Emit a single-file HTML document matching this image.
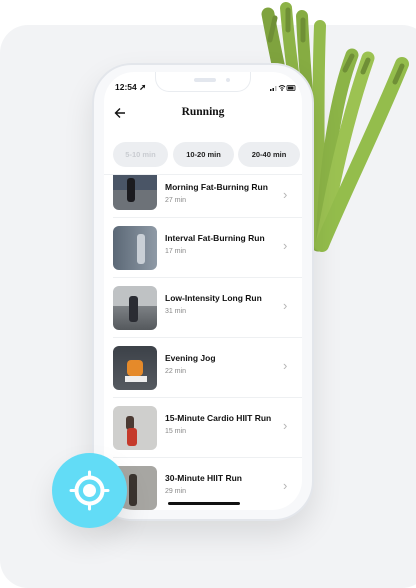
<!DOCTYPE html>
<html><head><meta charset="utf-8">
<style>
*{margin:0;padding:0;box-sizing:border-box}
body{width:416px;height:588px;background:#fff;position:relative;overflow:hidden;font-family:"Liberation Sans",sans-serif}
.card{position:absolute;left:0;top:25px;width:430px;height:563px;background:#f2f3f5;border-radius:28px}
.asp{position:absolute;left:0;top:0}
.phone{position:absolute;left:92px;top:63px;width:222px;height:458px;border-radius:40px;background:#f7f8fa;border:2px solid #e3e6eb;box-shadow:0 14px 30px rgba(0,0,0,.10)}
.screen{position:absolute;left:104px;top:72px;width:198px;height:438px;border-radius:30px;background:#fff;overflow:hidden}
.notch{position:absolute;left:51px;top:0;width:96px;height:20px;border:1.5px solid #e9ecf0;border-top:none;border-radius:0 0 14px 14px;background:#fff}
.notch .s{position:absolute;left:38px;top:6px;width:22px;height:4px;border-radius:2px;background:#e3e7ee}
.notch .d{position:absolute;left:70px;top:6px;width:4px;height:4px;border-radius:2px;background:#e3e7ee}
.time{position:absolute;left:11px;top:10px;font-size:8.5px;color:#111;font-weight:bold}
.title{position:absolute;left:0;width:198px;top:34px;text-align:center;font-family:"Liberation Serif","DejaVu Serif",serif;font-weight:bold;font-size:11.5px;color:#111}
.back{position:absolute;left:10px;top:35px}
.chip{position:absolute;top:70px;height:25px;border-radius:13px;background:#eceef1;font-size:7.5px;font-weight:bold;color:#222;text-align:center;line-height:25px}
.row{position:absolute;left:0;width:198px;height:60px}
.th{position:absolute;left:9px;top:0;width:44px;height:44px;border-radius:6px;overflow:hidden}
.t1{position:absolute;left:61px;top:7px;font-size:8.5px;font-weight:bold;color:#111;white-space:nowrap}
.t2{position:absolute;left:61px;top:22px;font-size:7px;color:#888}
.chev{position:absolute;left:179px;top:12px;font-size:13px;color:#b5b5b5}
.sep{position:absolute;left:9px;right:0;top:51px;height:1px;background:#eef0f2}
.home{position:absolute;left:64px;top:430px;width:72px;height:3px;border-radius:2px;background:#111}
.btn{position:absolute;left:52px;top:453px;width:75px;height:75px;border-radius:50%;background:#62dcf6;box-shadow:0 14px 28px rgba(0,0,0,.10)}
</style></head><body>
<div class="card"></div>
<svg class="asp" width="416" height="260" viewBox="0 0 416 260">
 <g stroke-linecap="round" fill="none">
  <path d="M318 245 C300 160 282 90 268 14" stroke="#7fa33e" stroke-width="13"/>
  <path d="M318 245 C305 150 292 80 286 8" stroke="#8db347" stroke-width="12"/>
  <path d="M320 245 C312 150 305 80 302 16" stroke="#86ac42" stroke-width="12"/>
  <path d="M320 245 C318 150 318 80 320 26" stroke="#94bb4c" stroke-width="12"/>
  <path d="M322 245 C325 170 335 100 352 55" stroke="#8cb447" stroke-width="13"/>
  <path d="M322 245 C335 170 350 110 368 58" stroke="#9cc252" stroke-width="13"/>
  <path d="M322 245 C345 190 375 130 402 64" stroke="#94bd4c" stroke-width="14"/>
  <path d="M270 40 L275 18 M288 30 L288 10 M303 40 L303 20 M345 70 L352 56 M363 72 L368 60 M395 82 L402 66" stroke="#6f8f36" stroke-width="5"/>
 </g>
</svg>
<div class="phone"></div>
<div class="screen">
 <div class="notch"><div class="s"></div><div class="d"></div></div>
 <div class="time">12:54 ➚</div>
 <svg style="position:absolute;left:166px;top:12px" width="26" height="8" viewBox="0 0 26 8">
  <rect x="0" y="5" width="1.5" height="2" fill="#111"/><rect x="2.5" y="4" width="1.5" height="3" fill="#111"/><rect x="5" y="2" width="1.5" height="5" fill="#bbb"/>
  <path d="M9 3 Q12 0 15 3 M10.5 4.5 Q12 3 13.5 4.5" stroke="#111" stroke-width="1" fill="none"/><circle cx="12" cy="6" r="0.9" fill="#111"/>
  <rect x="17" y="1.5" width="8" height="5" rx="1" fill="none" stroke="#111" stroke-width="0.8"/><rect x="18" y="2.5" width="5.5" height="3" fill="#111"/>
 </svg>
 <svg class="back" width="12" height="12" viewBox="0 0 12 12"><path d="M11 6H1.5M6 1.5L1.5 6L6 10.5" stroke="#111" stroke-width="1.4" fill="none"/></svg>
 <div class="title">Running</div>
 <div class="chip" style="left:9px;width:55px;color:#c9ccd1">5-10 min</div>
 <div class="chip" style="left:69px;width:61px">10-20 min</div>
 <div class="chip" style="left:134px;width:62px">20-40 min</div>
 <div style="position:absolute;left:0;top:102px;width:198px;height:1px;background:#eef0f2"></div>

 <div class="row" style="top:94px;clip-path:inset(9px 0 0 0)">
  <div class="th" style="background:linear-gradient(180deg,#4a5566 0 55%,#6d7278 55%)"><div style="position:absolute;left:14px;top:12px;width:8px;height:24px;background:#1b1b1f;border-radius:3px"></div></div>
  <div class="t1" style="top:16px">Morning Fat-Burning Run</div><div class="t2" style="top:31px">27 min</div><div class="chev" style="top:21px">›</div>
 </div>
 <div style="position:absolute;left:9px;right:0;top:145px;height:1px;background:#eef0f2"></div>

 <div class="row" style="top:154px">
  <div class="th" style="background:linear-gradient(90deg,#5b6876,#8f9aa6)"><div style="position:absolute;left:24px;top:8px;width:8px;height:30px;background:#c9cfd6;border-radius:3px"></div></div>
  <div class="t1">Interval Fat-Burning Run</div><div class="t2">17 min</div><div class="chev">›</div><div class="sep"></div>
 </div>
 <div class="row" style="top:214px">
  <div class="th" style="background:linear-gradient(180deg,#bfc2c4 0 45%,#7d8185 45%,#55595d)"><div style="position:absolute;left:16px;top:10px;width:9px;height:26px;background:#2a2c33;border-radius:3px"></div></div>
  <div class="t1">Low-Intensity Long Run</div><div class="t2">31 min</div><div class="chev">›</div><div class="sep"></div>
 </div>
 <div class="row" style="top:274px">
  <div class="th" style="background:linear-gradient(180deg,#3c4148,#555a60)"><div style="position:absolute;left:14px;top:14px;width:16px;height:16px;background:#e58a2a;border-radius:4px"></div><div style="position:absolute;left:12px;top:30px;width:22px;height:6px;background:#eee"></div></div>
  <div class="t1">Evening Jog</div><div class="t2">22 min</div><div class="chev">›</div><div class="sep"></div>
 </div>
 <div class="row" style="top:334px">
  <div class="th" style="background:#cfcfcd"><div style="position:absolute;left:13px;top:10px;width:8px;height:14px;background:#4b3a33;border-radius:3px"></div><div style="position:absolute;left:14px;top:22px;width:10px;height:18px;background:#c53a2b;border-radius:3px"></div></div>
  <div class="t1">15-Minute Cardio HIIT Run</div><div class="t2">15 min</div><div class="chev">›</div><div class="sep"></div>
 </div>
 <div class="row" style="top:394px">
  <div class="th" style="background:#a7a6a2"><div style="position:absolute;left:16px;top:8px;width:8px;height:32px;background:#3a342f;border-radius:3px"></div></div>
  <div class="t1">30-Minute HIIT Run</div><div class="t2">29 min</div><div class="chev">›</div>
 </div>
 <div class="home"></div>
</div>
<div class="btn">
 <svg width="75" height="75" viewBox="0 0 75 75">
  <circle cx="37.5" cy="37.5" r="13" stroke="#fff" stroke-width="4" fill="none"/>
  <circle cx="37.5" cy="37.5" r="6.5" fill="#fff"/>
  <path d="M37.5 19v6M37.5 50v6M19 37.5h6M50 37.5h6" stroke="#fff" stroke-width="3" stroke-linecap="round"/>
 </svg>
</div>
</body></html>
